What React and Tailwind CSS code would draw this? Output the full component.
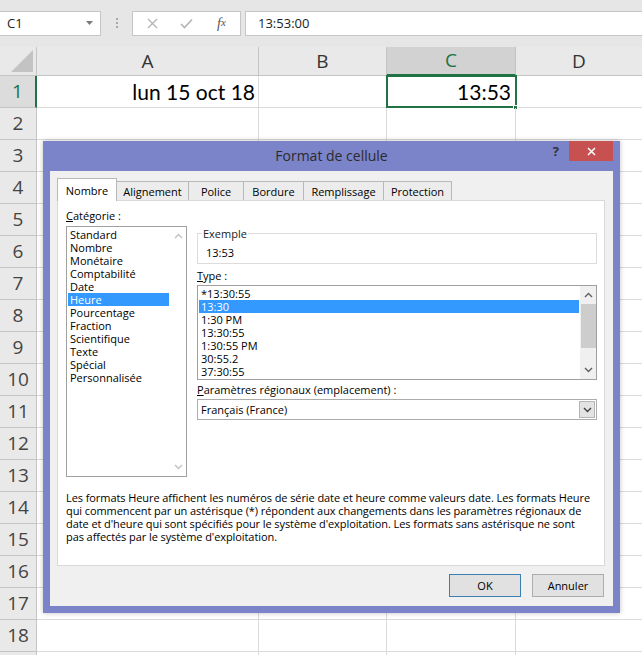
import React from "react";

const ChevUp = ({ color = "#606060" }) => (
  <svg width="9" height="6" viewBox="0 0 9 6">
    <path d="M1 5 L4.5 1.5 L8 5" fill="none" stroke={color} strokeWidth="1.4" />
  </svg>
);
const ChevDown = ({ color = "#606060" }) => (
  <svg width="9" height="6" viewBox="0 0 9 6">
    <path d="M1 1 L4.5 4.5 L8 1" fill="none" stroke={color} strokeWidth="1.4" />
  </svg>
);

function Toolbar() {
  return (
    <div className="h-[47px] bg-[#e6e6e6] flex items-start pt-[11px]">
      <div className="w-[101px] h-[25px] bg-white border border-l-0 border-[#c6c6c6] flex items-center justify-between pl-[7px] pr-[6px] text-[13px] text-[#222]">
        <span>C1</span>
        <svg width="8" height="5" viewBox="0 0 8 5">
          <path d="M0 0 H7 L3.5 4 Z" fill="#7a7a7a" />
        </svg>
      </div>
      <div className="w-[31px] flex flex-col items-center gap-[2px] pt-[7px]">
        <div className="w-[2px] h-[2px] bg-[#a8a8a8]" />
        <div className="w-[2px] h-[2px] bg-[#a8a8a8]" />
        <div className="w-[2px] h-[2px] bg-[#a8a8a8]" />
      </div>
      <div className="w-[109px] h-[25px] bg-white border border-[#c6c6c6] flex items-center pl-[2px]">
        <div className="w-[34px] flex justify-center">
          <svg width="11" height="11" viewBox="0 0 11 11">
            <path d="M1 1 L10 10 M10 1 L1 10" stroke="#b4b4b4" strokeWidth="1.3" />
          </svg>
        </div>
        <div className="w-[34px] flex justify-center">
          <svg width="13" height="11" viewBox="0 0 13 11">
            <path d="M1 6 L4.5 9.5 L12 1.5" fill="none" stroke="#b4b4b4" strokeWidth="1.6" />
          </svg>
        </div>
        <div className="w-[34px] flex justify-center pl-[3px] font-['Liberation_Serif',serif] italic text-[14px] text-[#555] leading-none">
          f<span className="text-[11px]">x</span>
        </div>
      </div>
      <div className="ml-[4px] flex-1 h-[25px] bg-white border border-r-0 border-[#c6c6c6] pl-[12px] text-[13px] text-[#222] flex items-center">
        13:53:00
      </div>
    </div>
  );
}

function Grid() {
  const rows = Array.from({ length: 19 }, (_, i) => i + 1);
  return (
    <div className="flex flex-col">
      <div className="flex h-[29px]">
        <div className="w-[37px] bg-[#e9e9e9] border-r border-b border-[#c4c4c4] flex items-end justify-end pr-[3px] pb-[3px]">
          <svg width="22" height="22" viewBox="0 0 22 22">
            <path d="M22 0 V22 H0 Z" fill="#c3c3c3" />
          </svg>
        </div>
        <div className="w-[222px] bg-[#e9e9e9] border-r border-b border-[#c4c4c4] flex items-center justify-center text-[19px] text-[#333]">A</div>
        <div className="w-[128px] bg-[#e9e9e9] border-r border-b border-[#c4c4c4] flex items-center justify-center text-[19px] text-[#333]">B</div>
        <div className="w-[129px] bg-[#d2d2d2] border-r border-[#c4c4c4] border-b-2 border-b-[#217346] flex items-center justify-center text-[19px] text-[#217346]">C</div>
        <div className="flex-1 bg-[#e9e9e9] border-b border-[#c4c4c4] flex items-center justify-center text-[19px] text-[#333]">D</div>
      </div>
      {rows.map((r) => (
        <div key={r} className="flex h-[32px] shrink-0">
          {r === 1 ? (
            <div className="w-[37px] bg-[#dcdcdc] border-r-2 border-r-[#217346] border-b border-b-[#c4c4c4] flex items-center justify-center text-[19px] text-[#217346]">
              {r}
            </div>
          ) : (
            <div className="w-[37px] bg-[#e9e9e9] border-r border-b border-[#c4c4c4] flex items-center justify-center text-[19px] text-[#444]">
              {r < 19 ? r : ""}
            </div>
          )}
          <div className="w-[222px] border-r border-b border-[#dadada] flex items-center justify-end pr-[3px] font-['Lato',sans-serif] text-[21px] text-black">
            {r === 1 ? "lun 15 oct 18" : ""}
          </div>
          <div className="w-[128px] border-r border-b border-[#dadada]" />
          <div className="relative w-[129px] border-r border-b border-[#dadada] flex items-center justify-end pr-[4px] font-['Lato',sans-serif] text-[21px] text-black">
            {r === 1 ? "13:53" : ""}
            {r === 1 && (
              <>
                <div className="absolute -left-[1px] -top-[1px] w-[131px] h-[33px] border-2 border-[#217346]" />
                <div className="absolute -right-[3px] -bottom-[3px] w-[5px] h-[5px] bg-[#217346] border border-white" />
              </>
            )}
          </div>
          <div className="flex-1 border-b border-[#dadada]" />
        </div>
      ))}
    </div>
  );
}

const categories = [
  "Standard",
  "Nombre",
  "Monétaire",
  "Comptabilité",
  "Date",
  "Heure",
  "Pourcentage",
  "Fraction",
  "Scientifique",
  "Texte",
  "Spécial",
  "Personnalisée",
];
const types = ["*13:30:55", "13:30", "1:30 PM", "13:30:55", "1:30:55 PM", "30:55.2", "37:30:55"];

function Dialog() {
  const tabs = [
    ["Alignement", "w-[73px]"],
    ["Police", "w-[56px]"],
    ["Bordure", "w-[61px]"],
    ["Remplissage", "w-[81px]"],
    ["Protection", "w-[69px]"],
  ];
  return (
    <div className="absolute left-[43px] top-[141px] w-[577px] h-[472px] bg-[#7b83c9] flex flex-col shadow-[0_0_5px_rgba(0,0,0,0.25)] text-[11px] leading-[13px] text-black">
      <div className="h-[30px] relative flex items-center justify-center">
        <span className="text-[14px] text-[#2b2b2b] leading-none">Format de cellule</span>
        <span className="absolute right-[61px] top-[4px] text-[13px] font-bold text-[#333] leading-none">?</span>
        <div className="absolute right-[7px] top-0 w-[44px] h-[20px] bg-[#c75050] flex items-center justify-center">
          <svg width="9" height="9" viewBox="0 0 9 9">
            <path d="M1 1 L8 8 M8 1 L1 8" stroke="#fff" strokeWidth="1.5" />
          </svg>
        </div>
      </div>
      <div className="flex-1 mx-[7px] mb-[7px] bg-[#f0f0f0] flex flex-col pt-[7px] pl-[7px] pr-[8px]">
        <div className="h-[22px] flex items-end">
          <div className="relative z-10 -mb-px w-[60px] h-[23px] bg-white border border-b-0 border-[#b9b9b9] flex items-center justify-center">
            Nombre
          </div>
          {tabs.map(([t, w]) => (
            <div
              key={t}
              className={`${w} -ml-px h-[19px] bg-[#ececec] border border-b-0 border-[#b9b9b9] flex items-center justify-center`}
            >
              {t}
            </div>
          ))}
        </div>
        <div className="h-[366px] bg-white border border-[#d9d9d9] flex flex-col pt-[8px] pl-[8px] pr-[7px]">
          <div className="flex gap-[10px]">
            <div className="w-[121px] flex flex-col">
              <div>
                <span className="underline">C</span>atégorie :
              </div>
              <div className="mt-[4px] h-[251px] border border-[#a0a0a0] flex">
                <div className="flex-1 p-[1px] flex flex-col">
                  {categories.map((c) => (
                    <div
                      key={c}
                      className={
                        c === "Heure"
                          ? "h-[13px] px-[2px] bg-[#3399ff] text-white"
                          : "h-[13px] px-[2px]"
                      }
                    >
                      {c}
                    </div>
                  ))}
                </div>
                <div className="w-[16px] flex flex-col items-center justify-between py-[6px]">
                  <ChevUp color="#c2c2c2" />
                  <ChevDown color="#c2c2c2" />
                </div>
              </div>
            </div>
            <div className="w-[400px] flex flex-col">
              <fieldset className="mt-[18px] border border-[#dcdcdc] pb-[4px]">
                <legend className="ml-[4px] px-[1px] text-[#222]">Exemple</legend>
                <div className="pt-[6px] pl-[8px]">13:53</div>
              </fieldset>
              <div className="mt-[5px]">
                <span className="underline">T</span>ype :
              </div>
              <div className="mt-[3px] h-[95px] border border-[#a0a0a0] flex">
                <div className="flex-1 p-[1px] flex flex-col">
                  {types.map((t, i) => (
                    <div
                      key={i}
                      className={
                        i === 1
                          ? "h-[13px] px-[2px] bg-[#3399ff] text-white"
                          : "h-[13px] px-[2px]"
                      }
                    >
                      {t}
                    </div>
                  ))}
                </div>
                <div className="w-[16px] bg-[#f0f0f0] flex flex-col items-center">
                  <div className="h-[18px] flex items-center justify-center">
                    <ChevUp />
                  </div>
                  <div className="w-[15px] h-[44px] bg-[#cdcdcd]" />
                  <div className="flex-1" />
                  <div className="h-[18px] flex items-center justify-center">
                    <ChevDown />
                  </div>
                </div>
              </div>
              <div className="mt-[3px]">
                <span className="underline">P</span>aramètres régionaux (emplacement) :
              </div>
              <div className="mt-[3px] h-[21px] border border-[#acacac] bg-white flex items-stretch">
                <div className="flex-1 pl-[3px] flex items-center">Français (France)</div>
                <div className="w-[16px] my-[1px] mr-[1px] bg-[#e3e3e3] border border-[#b5b5b5] flex items-center justify-center">
                  <ChevDown color="#404040" />
                </div>
              </div>
            </div>
          </div>
          <div className="mt-[14px] whitespace-nowrap tracking-[-0.08px]">
            Les formats Heure affichent les numéros de série date et heure comme valeurs date. Les formats Heure
            <br />
            qui commencent par un astérisque (*) répondent aux changements dans les paramètres régionaux de
            <br />
            date et d'heure qui sont spécifiés pour le système d'exploitation. Les formats sans astérisque ne sont
            <br />
            pas affectés par le système d'exploitation.
          </div>
        </div>
        <div className="mt-[8px] flex justify-end gap-[11px] pr-[1px]">
          <div className="w-[72px] h-[23px] bg-[#e1e1e1] border border-[#3c7fb1] flex items-center justify-center">OK</div>
          <div className="w-[72px] h-[23px] bg-[#e1e1e1] border border-[#adadad] flex items-center justify-center">Annuler</div>
        </div>
      </div>
    </div>
  );
}

export default function App() {
  return (
    <div className="relative w-[642px] h-[655px] overflow-hidden bg-white font-['Open_Sans',sans-serif] text-black">
      <Toolbar />
      <Grid />
      <Dialog />
    </div>
  );
}
